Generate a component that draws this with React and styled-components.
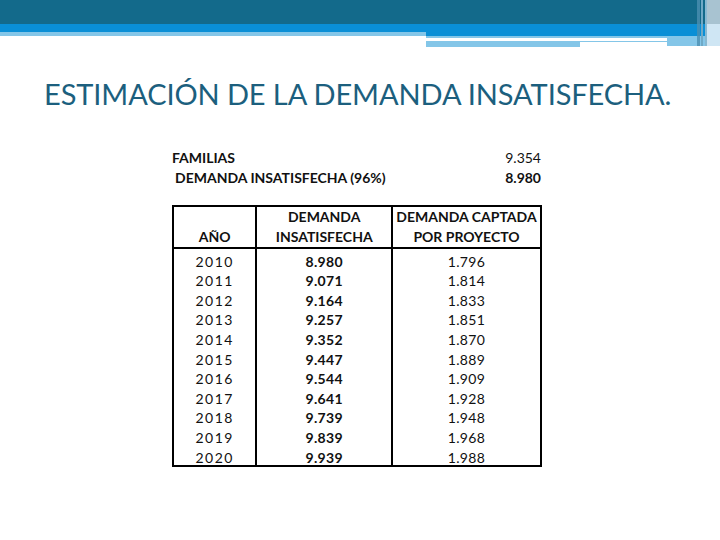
import styled, { createGlobalStyle } from 'styled-components';

const GlobalStyle = createGlobalStyle`
  html, body {
    margin: 0;
    padding: 0;
    background: #ffffff;
  }
`;

const Slide = styled.div`
  width: 720px;
  height: 540px;
  overflow: hidden;
  display: flex;
  flex-direction: column;
  background: #fff;
`;

const Banner = styled.svg`
  display: block;
  width: 720px;
  height: 50px;
  flex-shrink: 0;
`;

const Title = styled.h1`
  margin: 26px 0 0 44px;
  font-family: 'Lato', 'Open Sans', sans-serif;
  font-weight: 400;
  font-size: 29px;
  line-height: 36px;
  letter-spacing: -0.1px;
  color: #1c5f7e;
  white-space: nowrap;
`;

const Summary = styled.div`
  margin: 36px 0 0 172px;
  width: 369px;
  display: flex;
  flex-direction: column;
  font-family: 'Lato', 'Open Sans', sans-serif;
  font-size: 14px;
  color: #111;
`;

const SummaryRow = styled.div`
  display: flex;
  justify-content: space-between;
  height: 20px;
  line-height: 20px;
  padding-left: ${(p) => p.$indent || 0}px;
`;

const Label = styled.span`
  font-weight: 700;
`;

const Value = styled.span`
  font-weight: ${(p) => (p.$bold ? 700 : 400)};
`;

const Table = styled.table`
  margin: 17px 0 0 172px;
  width: 370px;
  border-collapse: collapse;
  border: 2px solid #000;
  font-family: 'Lato', 'Open Sans', sans-serif;
  font-size: 14px;
  color: #111;
`;

const Head = styled.th`
  height: 34px;
  padding: 0;
  border-left: 2px solid #000;
  border-bottom: 2px solid #000;
  font-weight: 700;
  text-align: center;
  vertical-align: bottom;
  line-height: 20px;
  width: ${(p) => p.$w}px;
`;

const Cell = styled.td`
  height: 15px;
  padding: 4.6px 0 0;
  border-left: 2px solid #000;
  text-align: center;
  line-height: 15px;
  font-weight: ${(p) => (p.$bold ? 700 : 400)};
  letter-spacing: ${(p) => (p.$spaced ? '1.5px' : '0.3px')};
`;

const rows = [
  ['2010', '8.980', '1.796'],
  ['2011', '9.071', '1.814'],
  ['2012', '9.164', '1.833'],
  ['2013', '9.257', '1.851'],
  ['2014', '9.352', '1.870'],
  ['2015', '9.447', '1.889'],
  ['2016', '9.544', '1.909'],
  ['2017', '9.641', '1.928'],
  ['2018', '9.739', '1.948'],
  ['2019', '9.839', '1.968'],
  ['2020', '9.939', '1.988'],
];

function HeaderBanner() {
  return (
    <Banner viewBox="0 0 720 50">
      <rect x="0" y="0" width="720" height="24" fill="#136a8b" />
      <rect x="0" y="24" width="720" height="8" fill="#0a8fd6" />
      <rect x="0" y="32" width="426" height="4" fill="#84c6e8" />
      <rect x="426" y="32" width="294" height="4" fill="#0a8fd6" />
      <rect x="426" y="36" width="241" height="2" fill="#84c6e8" />
      <rect x="426" y="38" width="241" height="3" fill="#ffffff" />
      <rect x="426" y="41" width="154" height="6" fill="#84c6e8" />
      <rect x="580" y="41" width="87" height="1" fill="#84c6e8" />
      <rect x="667" y="36" width="40" height="10" fill="#84c6e8" />
      <rect x="697" y="0" width="3" height="46" fill="#4c8fb0" opacity="0.8" />
      <rect x="701" y="0" width="2" height="46" fill="#6fa9c6" />
      <rect x="705" y="0" width="2" height="46" fill="#88b9d2" />
      <rect x="707" y="0" width="13" height="24" fill="#a8c3d1" />
      <rect x="707" y="24" width="13" height="22" fill="#cfe6f4" />
    </Banner>
  );
}

function App() {
  return (
    <Slide>
      <GlobalStyle />
      <HeaderBanner />
      <Title>ESTIMACIÓN DE LA DEMANDA INSATISFECHA.</Title>
      <Summary>
        <SummaryRow>
          <Label>FAMILIAS</Label>
          <Value>9.354</Value>
        </SummaryRow>
        <SummaryRow $indent={3}>
          <Label>DEMANDA INSATISFECHA (96%)</Label>
          <Value $bold>8.980</Value>
        </SummaryRow>
      </Summary>
      <Table>
        <thead>
          <tr>
            <Head $w={82}>AÑO</Head>
            <Head $w={134}>
              DEMANDA
              <br />
              INSATISFECHA
            </Head>
            <Head $w={148}>
              DEMANDA CAPTADA
              <br />
              POR PROYECTO
            </Head>
          </tr>
        </thead>
        <tbody>
          {rows.map(([year, demand, captured]) => (
            <tr key={year}>
              <Cell $spaced>{year}</Cell>
              <Cell $bold>{demand}</Cell>
              <Cell>{captured}</Cell>
            </tr>
          ))}
        </tbody>
      </Table>
    </Slide>
  );
}

export default App;
